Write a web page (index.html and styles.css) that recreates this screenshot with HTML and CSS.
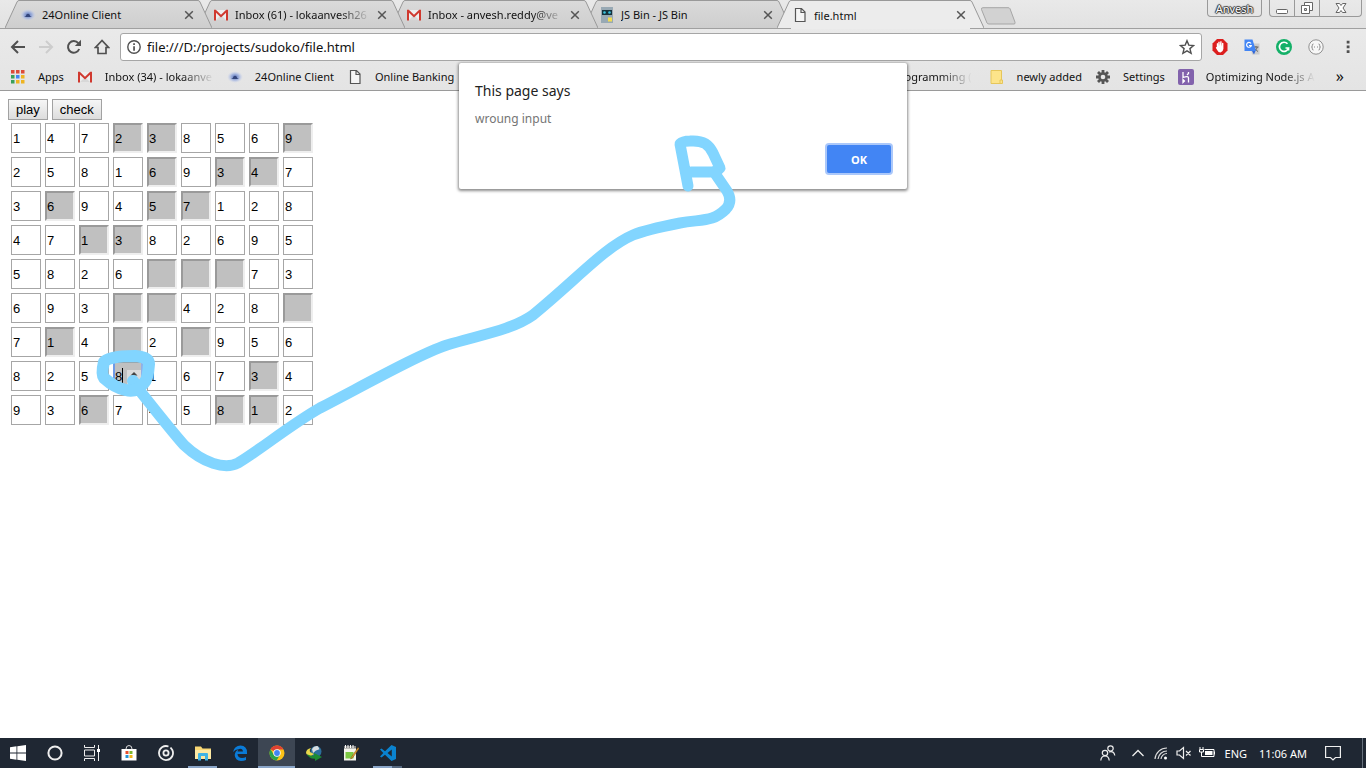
FILE: index.html
```html
<!DOCTYPE html>
<html lang="en">
<head>
<meta charset="utf-8">
<meta name="viewport" content="width=device-width, initial-scale=1">
<title>file.html</title>
<link rel="stylesheet" href="styles.css">
<script src="board.js" defer></script>
</head>
<body>
<svg class="sprites" aria-hidden="true">
  <defs>
    <radialGradient id="haze"><stop offset="0" stop-color="#5470b8"/><stop offset=".5" stop-color="#93a8dc" stop-opacity=".8"/><stop offset="1" stop-color="#c9d3f0" stop-opacity="0"/></radialGradient>
    <linearGradient id="tabfill" x1="0" y1="0" x2="0" y2="1"><stop offset="0" stop-color="#dadada"/><stop offset="1" stop-color="#cecece"/></linearGradient>
  </defs>
  <symbol id="i-24" viewBox="0 0 16 16"><ellipse cx="8" cy="8" rx="8" ry="6" fill="url(#haze)"/><path d="M4 10q2-.5 2.500-2.500 1.500-1.500 3 0Q10 9.500 12 10z" fill="#34467c"/></symbol>
  <symbol id="i-gmail" viewBox="0 0 16 16"><path d="M1 3h14v10H1z" fill="#eeeeee"/><path d="M3 13l5-5 5 5z" fill="#d8d8d8"/><path d="M1 13.500V2.700h1.800L8 7.800l5.200-5.100H15v10.800h-2V5.800L8 10.500 3 5.800v7.700z" fill="#d0392f"/></symbol>
  <symbol id="i-page" viewBox="0 0 16 16"><path d="M3.500 1.500h6l3.500 3.500v9.500H3.500zM9 1.500V5.500h4" fill="#f5f5f5" stroke="#555" stroke-width="1.200"/></symbol>
  <symbol id="i-close" viewBox="0 0 10 10"><path d="M1.200 1.200l7.600 7.600M8.800 1.200l-7.600 7.600" stroke="#555" stroke-width="1.500"/></symbol>
  <symbol id="tab-left" viewBox="0 0 14 28"><path d="M0 28L12 2q.7-1.500 2-1.500V28z" fill="var(--tab)"/><path d="M0 28L12 2q.7-1.500 2-1.500" fill="none" stroke="#999"/></symbol>
  <symbol id="tab-right" viewBox="0 0 14 28"><path d="M14 28L2 2Q1.300.5 0 .5V28z" fill="var(--tab)"/><path d="M14 28L2 2Q1.300.5 0 .5" fill="none" stroke="#999"/></symbol>
</svg>

<header class="chrome">
  <div class="tabstrip">
    <div class="tabs">
      <div class="tab"><svg class="slope"><use href="#tab-left"/></svg><div class="tab-body"><svg class="fav"><use href="#i-24"/></svg><span class="tab-title">24Online Client</span><button class="tab-close" aria-label="Close tab"><svg><use href="#i-close"/></svg></button></div><svg class="slope"><use href="#tab-right"/></svg></div>
      <div class="tab"><svg class="slope"><use href="#tab-left"/></svg><div class="tab-body"><svg class="fav"><use href="#i-gmail"/></svg><span class="tab-title fade">Inbox (61) - lokaanvesh26</span><button class="tab-close" aria-label="Close tab"><svg><use href="#i-close"/></svg></button></div><svg class="slope"><use href="#tab-right"/></svg></div>
      <div class="tab"><svg class="slope"><use href="#tab-left"/></svg><div class="tab-body"><svg class="fav"><use href="#i-gmail"/></svg><span class="tab-title fade">Inbox - anvesh.reddy@ve</span><button class="tab-close" aria-label="Close tab"><svg><use href="#i-close"/></svg></button></div><svg class="slope"><use href="#tab-right"/></svg></div>
      <div class="tab"><svg class="slope"><use href="#tab-left"/></svg><div class="tab-body"><svg class="fav" viewBox="0 0 16 16"><path d="M2 0h12v16H2z" fill="#98a9b4"/><path d="M3 3h10v5H3z" fill="#15323c"/><circle cx="5.500" cy="5.500" r="1.300" fill="#3cc4e0"/><circle cx="10.500" cy="5.500" r="1.300" fill="#3cc4e0"/><path d="M9 10.500h4v4H9z" fill="#f3dc50"/></svg><span class="tab-title">JS Bin - JS Bin</span><button class="tab-close" aria-label="Close tab"><svg><use href="#i-close"/></svg></button></div><svg class="slope"><use href="#tab-right"/></svg></div>
      <div class="tab active"><svg class="slope"><use href="#tab-left"/></svg><div class="tab-body"><svg class="fav"><use href="#i-page"/></svg><span class="tab-title">file.html</span><button class="tab-close" aria-label="Close tab"><svg><use href="#i-close"/></svg></button></div><svg class="slope"><use href="#tab-right"/></svg></div>
    </div>
    <button class="new-tab" aria-label="New tab"><svg viewBox="0 0 36 18"><path d="M3 .7h25q1.500 0 2 1l5 13.500q.5 1.800-1 1.800H9q-1.500 0-2-1L1.500 2.500Q1 .7 3 .7z" fill="#d2d2d2" stroke="#a6a6a6"/></svg></button>
    <div class="win">
      <button class="user">Anvesh</button>
      <div class="win-group">
        <button class="w-min" aria-label="Minimize"><svg viewBox="0 0 14 14"><rect x="1.500" y="8.500" width="11" height="4" rx="1" fill="#fff" stroke="#666"/></svg></button>
        <button class="w-max" aria-label="Restore"><svg viewBox="0 0 14 14"><path d="M4.500 1.500h8v8h-8z" fill="#fff" stroke="#666"/><path d="M1.500 4.500h8v8h-8z" fill="#fff" stroke="#666"/><path d="M4.500 7.500h2v2h-2z" fill="#ddd" stroke="#666"/></svg></button>
        <button class="w-close" aria-label="Close"><svg viewBox="0 0 14 14"><path d="M2 2.500h3.500L7 4.500l1.500-2H12L9 7l3 4.500H8.500L7 9.500l-1.500 2H2L5 7z" fill="#fff" stroke="#666"/></svg></button>
      </div>
    </div>
  </div>

  <div class="toolbar">
    <button class="nav" aria-label="Back"><svg viewBox="0 0 16 16"><path d="M15 8H2M8 2L2 8l6 6" fill="none" stroke="#505050" stroke-width="2"/></svg></button>
    <button class="nav" aria-label="Forward"><svg viewBox="0 0 16 16"><path d="M1 8h13M8 2l6 6-6 6" fill="none" stroke="#cdcdcd" stroke-width="2"/></svg></button>
    <button class="nav" aria-label="Reload"><svg viewBox="0 0 16 16"><path d="M13.200 10A5.800 5.800 0 1 1 12.300 4.200" fill="none" stroke="#505050" stroke-width="2"/><path d="M15 .8v6.200H8.800z" fill="#505050"/></svg></button>
    <button class="nav" aria-label="Home"><svg viewBox="0 0 16 16"><path d="M8 1.500L1.500 8.500H4v6h8v-6h2.500z" fill="none" stroke="#505050" stroke-width="1.700"/></svg></button>
    <div class="omnibox">
      <svg viewBox="0 0 16 16"><circle cx="8" cy="8" r="6.200" fill="none" stroke="#505050" stroke-width="1.400"/><path d="M7.200 4.200h1.700v1.700H7.200zM7.200 7.200h1.700v4.600H7.200z" fill="#505050"/></svg>
      <input type="text" aria-label="Address" value="file:///D:/projects/sudoko/file.html">
      <button class="nav" aria-label="Bookmark this page"><svg viewBox="0 0 16 16"><path d="M8 1.700l1.800 4.400 4.800.4-3.700 3.100 1.200 4.700L8 11.800l-4.100 2.500 1.200-4.700L1.400 6.500l4.800-.4z" fill="none" stroke="#505050" stroke-width="1.400"/></svg></button>
    </div>
    <div class="exts">
      <button class="nav" aria-label="Ad blocker"><svg viewBox="0 0 16 16"><path d="M5 0h6l4.500 4.500v7L11 16H5L.5 11.500v-7z" fill="#dc1f1f"/><path d="M4.800 8V4.500q.6-.9 1.200 0V7.500L6.300 3q.7-.9 1.400 0V7L8.300 2.500q.7-.8 1.300.1V7.500l.5-3.500q.8-.7 1.300.2V10q-.4 3-2.900 3.400-2.200 0-3.200-2.200L3.800 8.700q.3-.9 1-.7z" fill="#fff"/></svg></button>
      <button class="nav" aria-label="Translate"><svg viewBox="0 0 16 16"><path d="M6 4.500h9.500v11H8z" fill="#ccc"/><path d="M9.500 8h5M12 7v1.500M13.500 8q-.8 3-3.500 4M11 9.500q1 2 3 3" stroke="#666" fill="none"/><path d="M.5.500h8l3.500 11.500H.5z" fill="#4285f4"/><path d="M8 12h3.500L10 15.500z" fill="#3367d6"/><path d="M7 4.500A2.400 2.400 0 1 0 7.300 6.500H5" fill="none" stroke="#fff" stroke-width="1.200"/></svg></button>
      <button class="nav" aria-label="Grammar"><svg viewBox="0 0 16 16"><circle cx="8" cy="8" r="8" fill="#14b068"/><path d="M11.500 4.800A4.600 4.600 0 1 0 12.500 9H9.500M12.500 8.500v3" fill="none" stroke="#fff" stroke-width="1.700"/></svg></button>
      <button class="nav" aria-label="JSON viewer"><svg viewBox="0 0 16 16"><circle cx="8" cy="8" r="7.200" fill="#f7f7f7" stroke="#909090"/><path d="M5.500 5q-1.500 0-1.200 1.500Q4.500 8 3.500 8q1 0 .8 1.500Q4 11 5.500 11M10.500 5q1.500 0 1.200 1.500Q11.500 8 12.500 8q-1 0-.8 1.500.3 1.500-1.200 1.500" fill="none" stroke="#888"/><path d="M6 8h1M9 8h1" stroke="#888"/></svg></button>
      <button class="nav" aria-label="Menu"><svg viewBox="0 0 16 16"><path d="M6.700 1.700h2.800v2.800H6.700zM6.700 6.500h2.800v2.800H6.700zM6.700 11.300h2.800v2.800H6.700z" fill="#505050"/></svg></button>
    </div>
  </div>

  <nav class="bookmarks" aria-label="Bookmarks">
    <a href="#"><svg viewBox="0 0 16 16"><path d="M1 1h3.500v3.500H1zM6 1h3.500v3.500H6zM11 1h3.500v3.500H11z" fill="#dd4b39"/><path d="M1 6h3.500v3.500H1zM1 11h3.500v3.500H1z" fill="#3aa05a"/><path d="M6 6h3.500v3.500H6z" fill="#4285f4"/><path d="M11 6h3.500v3.500H11zM6 11h3.500v3.500H6zM11 11h3.500v3.500H11z" fill="#eeb422"/></svg><span>Apps</span></a>
    <a href="#"><svg><use href="#i-gmail"/></svg><span class="clip fade">Inbox (34) - lokaanve</span></a>
    <a href="#"><svg><use href="#i-24"/></svg><span>24Online Client</span></a>
    <a href="#"><svg><use href="#i-page"/></svg><span>Online Banking</span></a>
    <a href="#" class="first-right"><span class="fade">Programming (</span></a>
    <a href="#"><svg viewBox="0 0 16 16"><path d="M2 1.500h10.500v13H2z" fill="#fde48a" stroke="#e6c65a"/><path d="M11 11h2.500v3.500H11z" fill="#fde48a" stroke="#e6c65a"/></svg><span>newly added</span></a>
    <a href="#"><svg viewBox="0 0 16 16"><path d="M8 1v14M1 8h14M3 3l10 10M13 3L3 13" stroke="#555" stroke-width="2.800"/><circle cx="8" cy="8" r="4.800" fill="#555"/><circle cx="8" cy="8" r="2.300" fill="#e8e8e8"/></svg><span>Settings</span></a>
    <a href="#"><svg viewBox="0 0 16 16"><rect width="16" height="16" rx="2" fill="#8262ac"/><path d="M5 3v5.500q5.500-2 5.500.5v4.500M5 10.500v3l1.500-1.500zM10.500 3v1.500L9 6" fill="none" stroke="#fff" stroke-width="1.300"/></svg><span class="clip fade">Optimizing Node.js A</span></a>
    <button class="more" aria-label="More bookmarks">»</button>
  </nav>
</header>

<main class="page">
  <div class="actions"><button>play</button><button>check</button></div>
  <table class="board"><tbody id="board"></tbody></table>
</main>

<footer class="taskbar">
  <div class="apps">
    <button aria-label="Start"><svg viewBox="0 0 16 16"><path d="M0 2.300l6.500-1v6.300H0zM7.300 1.200L16 0v7.600H7.300zM0 8.400h6.500v6.300l-6.500-1zM7.300 8.400H16V16l-8.700-1.200z" fill="#fff"/></svg></button>
    <button aria-label="Search"><svg viewBox="0 0 16 16"><circle cx="8" cy="8" r="6.600" fill="none" stroke="#eee" stroke-width="2"/></svg></button>
    <button aria-label="Task view"><svg viewBox="0 0 16 16"><path d="M.5 0v2.500h10V0M.5 16v-2.500h10V16M.5 5h10v6H.5zM14.500 0v16" fill="none" stroke="#eee"/><path d="M13 4h3v3h-3z" fill="#fff"/></svg></button>
    <button aria-label="Store"><svg viewBox="0 0 16 16"><path d="M.5 4h15v11.500H.5z" fill="#fff"/><path d="M5 4q0-3.500 3-3.500T11 4" fill="none" stroke="#ddd"/><path d="M4.500 6h3v3h-3z" fill="#e8502d"/><path d="M8.500 6h3v3h-3z" fill="#7db72f"/><path d="M4.500 10h3v3h-3z" fill="#2494d6"/><path d="M8.500 10h3v3h-3z" fill="#f0b51c"/></svg></button>
    <button aria-label="Music"><svg viewBox="0 0 16 16"><path d="M10.500 1.500A7 7 0 1 0 14.300 5L12.500 2.500" fill="none" stroke="#eee" stroke-width="1.800"/><circle cx="8" cy="8" r="2.600" fill="none" stroke="#eee" stroke-width="1.800"/></svg></button>
    <button class="open" aria-label="File Explorer"><svg viewBox="0 0 16 16"><path d="M0 1.500h6l1.500 2H16V14H0z" fill="#f8d775"/><path d="M0 5h16v9H0z" fill="#fde9a3"/><path d="M3 15.500V9q0-1 1-1h8q1 0 1 1v6.500h-3V11H6v4.500z" fill="#40b4e5"/></svg></button>
    <button aria-label="Edge"><svg viewBox="0 0 16 16"><path d="M1 7Q2.500.5 8.500.5 15 .8 15 7.500V9H5.500q.3 3.800 4.500 4 2.300 0 4-1v3q-2 1-5 1-6-.4-6.300-6Q3 6 7 4 3 4.300 1 7zM5.600 6.500h5.300Q10.800 3.700 8.300 3.700T5.600 6.500z" fill="#0a7bd8"/></svg></button>
    <button class="open current" aria-label="Chrome"><svg viewBox="0 0 16 16"><circle cx="8" cy="8" r="7.500" fill="#fbc116"/><path d="M8 8L1.500 4.200A7.500 7.500 0 0 1 14.500 4.500H8z" fill="#df4132"/><path d="M8 8l3 2-3.500 5.500A7.500 7.500 0 0 1 1.500 4.200L5 10z" fill="#2ba24c"/><circle cx="8" cy="8" r="3.700" fill="#fff"/><circle cx="8" cy="8" r="2.900" fill="#4285f4"/></svg></button>
    <button aria-label="Download manager"><svg viewBox="0 0 16 16"><circle cx="10" cy="6.500" r="5.500" fill="#2b6f9c"/><path d="M6 4q2-3.500 6-2.800l1.500 3L10 5.500 7 8z" fill="#d8dde0"/><path d="M0 8q0-4 5-5Q3 5 4 7l4 2-3 2Q1 11 0 8z" fill="#e9d84b"/><path d="M1 9q3 2.500 7 1.500V8l8 4-7 4v-2.300Q3 14 1 9z" fill="#1b8c32"/></svg></button>
    <button aria-label="Notepad"><svg viewBox="0 0 16 16"><path d="M1 1h12v14.500H1z" fill="#f5f5ed"/><path d="M1 1h12v2.500H1z" fill="#888"/><path d="M2.500 0v3M5 0v3M7.500 0v3M10 0v3" stroke="#fff"/><path d="M2.500 7h8v6.500h-8z" fill="#7cc943"/><path d="M15 2.500L8.500 12 7.500 14l2-1L16 3.500z" fill="#e9a32b" stroke="#775018" stroke-width=".5"/></svg></button>
    <button class="open multi" aria-label="Code editor"><svg viewBox="0 0 16 16"><path d="M11.500 0L16 2v12l-4.500 2L5 9.700l-3.500 2.800L0 11.500 3.300 8 0 4.500l1.500-1L5 6.300zM11.800 4.500L7.500 8l4.300 3.500z" fill="#0a83d0"/></svg></button>
  </div>
  <div class="tray">
    <button aria-label="People"><svg viewBox="0 0 16 16"><circle cx="10.500" cy="3.500" r="2.700" fill="none" stroke="#eee" stroke-width="1.200"/><path d="M9 7q5-1.500 5.800 3.500" fill="none" stroke="#eee" stroke-width="1.200"/><circle cx="5" cy="8" r="2.700" fill="none" stroke="#eee" stroke-width="1.200"/><path d="M.8 15.500Q1.200 11 5 11t4.200 4.500" fill="none" stroke="#eee" stroke-width="1.200"/></svg></button>
    <button aria-label="Hidden icons"><svg viewBox="0 0 16 16"><path d="M2.500 11L8 5.500l5.500 5.500" fill="none" stroke="#eee" stroke-width="1.300"/></svg></button>
    <button aria-label="Network"><svg viewBox="0 0 16 16"><path d="M2 14A12 12 0 0 1 14 3M5 14a9 9 0 0 1 9-8M8 14a6 6 0 0 1 6-5.500" fill="none" stroke="#ddd" stroke-width="1.200"/><circle cx="12.500" cy="13" r="1.500" fill="#fff"/></svg></button>
    <button aria-label="Volume"><svg viewBox="0 0 16 16"><path d="M1 6h2.500L7.500 2.500v11L3.500 10H1zM10 6l4.500 4.500M14.500 6L10 10.500" fill="none" stroke="#eee" stroke-width="1.200"/></svg></button>
    <button aria-label="Battery"><svg viewBox="0 0 16 16"><path d="M5.500 4.500h9.500v7H4.500" fill="none" stroke="#fff"/><path d="M6 6h7.500v4H6zM15 6.500h1v3h-1z" fill="#fff"/><path d="M1 2v2M4 2v2M.5 4.500h4V7h-4zM2.500 7v4.500H6" fill="none" stroke="#fff"/></svg></button>
    <span class="lang">ENG</span>
    <time class="clock">11:06 AM</time>
    <button aria-label="Notifications"><svg viewBox="0 0 16 16"><path d="M.6 1.500h14.800v11H10.500L8 15l-2.500-2.500H.6z" fill="none" stroke="#eee" stroke-width="1.200"/></svg></button>
    <span class="peek"></span>
  </div>
</footer>

<div class="dialog" role="alertdialog" aria-labelledby="dlg-title" aria-describedby="dlg-text">
  <h1 id="dlg-title">This page says</h1>
  <p id="dlg-text">wroung input</p>
  <div class="dialog-actions"><button>OK</button></div>
</div>

<svg class="ink" width="760" height="480" viewBox="0 0 760 480" aria-hidden="true">
  <g fill="none" stroke="#82d5ff" stroke-width="11" stroke-linecap="round" stroke-linejoin="round">
    <path d="M688 186L680 144Q683 141 690 141C704 140 709 145 713 153L720 168Q717 172 710 172H691"/>
    <path d="M714 172L727 191Q733 201 726 209C713 222 703 219 680 223C660 227 645 230 633 235C605 247 577 279 533 315C512 330 480 335 447 345C420 354 370 382 320 408C290 425 260 450 238 463C225 470 203 463 184 445Q174 434 136 386"/>
    <path d="M133 381L139 390" stroke-width="12"/>
    <path d="M104 362Q108 356 135 356Q149 357 149 364Q148 379 144 383Q136 393 126 390Q115 388 104 378Q101 374 104 362z" stroke-width="12"/>
  </g>
</svg>
</body>
</html>
```

FILE: styles.css
```css
* { box-sizing: border-box; }

body {
  margin: 0;
  min-height: 100vh;
  display: flex;
  flex-direction: column;
  position: relative;
  background: #fff;
  font-family: "Noto Sans", "Open Sans", sans-serif;
  font-size: 11px;
  color: #111;
}

button {
  font: inherit;
  color: inherit;
  border: 0;
  padding: 0;
  background: none;
}

svg { display: block; flex: none; }

.sprites { position: absolute; width: 0; height: 0; }

.fade {
  -webkit-mask-image: linear-gradient(to left, transparent, #000 32px);
  mask-image: linear-gradient(to left, transparent, #000 32px);
}

/* Tab strip */
.chrome { background: linear-gradient(#ececec, #e4e4e4); border-bottom: 1px solid #9a9a9a; }

.tabstrip {
  display: flex;
  height: 29px;
  padding-left: 5px;
  background: linear-gradient(#e9e9e9, #e2e2e2);
  border-bottom: 1px solid #a0a0a0;
}

.tabs { display: flex; flex: 0 1 979px; height: 28px; min-width: 0; }

.tab {
  --tab: url(#tabfill);
  display: flex;
  flex: 0 1 207px;
  min-width: 0;
  margin-right: -14px;
  position: relative;
}

.tab:nth-child(1) { z-index: 4; }
.tab:nth-child(2) { z-index: 3; }
.tab:nth-child(3) { z-index: 2; }
.tab:nth-child(4) { z-index: 1; }
.tab.active { --tab: #ececec; z-index: 5; height: 29px; margin-right: 0; }

.slope { width: 14px; height: 28px; }

.tab-body {
  flex: 1;
  min-width: 0;
  display: flex;
  align-items: center;
  padding: 0 4px 0 1px;
  border-top: 1px solid #999;
  background: linear-gradient(#dadada, #cecece);
}

.active .tab-body { background: #ececec; }

.fav { width: 16px; height: 16px; }

.tab-title { flex: 1; min-width: 0; margin: 0 6px; overflow: hidden; white-space: nowrap; }

.tab-close { width: 10px; height: 10px; }
.tab-close svg { width: 10px; height: 10px; }

.new-tab { margin: 7px 0 0 -4px; height: 18px; }
.new-tab svg { width: 36px; height: 18px; }

.win { display: flex; gap: 7px; margin-left: auto; padding-right: 4px; height: 17px; }

.user, .win-group {
  border: 1px solid #999;
  border-top: 0;
  border-radius: 0 0 4px 4px;
}

.user {
  width: 55px;
  color: #fff;
  text-shadow: 0 0 1px #333, 1px 0 1px #333, -1px 0 1px #333, 0 1px 1px #333, 0 -1px 1px #333;
}

.win-group { display: flex; }
.win-group button { display: grid; place-items: center; width: 25px; border-right: 1px solid #999; }
.win-group .w-close { width: 41px; border-right: 0; }
.win-group svg { width: 14px; height: 14px; }

/* Toolbar */
.toolbar { display: flex; align-items: center; gap: 12px; height: 34px; padding: 2px 10px 0; }

.nav, .nav svg { width: 16px; height: 16px; }

.omnibox {
  flex: 1;
  display: flex;
  align-items: center;
  gap: 5px;
  height: 28px;
  margin: 0 -2px;
  padding: 0 6px 0 5px;
  border: 1px solid #a6a6a6;
  border-radius: 3px;
  background: #fff;
}

.omnibox > svg { width: 16px; height: 16px; }

.omnibox input {
  flex: 1;
  min-width: 0;
  border: 0;
  padding: 0;
  outline: 0;
  background: none;
  font: 13px "Noto Sans", "Open Sans", sans-serif;
  color: #111;
}

.exts { display: flex; gap: 16px; }

/* Bookmarks bar */
.bookmarks { display: flex; align-items: center; gap: 13px; height: 27px; padding: 0 22px 0 10px; }

.bookmarks a {
  display: flex;
  align-items: center;
  gap: 12px;
  color: inherit;
  text-decoration: none;
  white-space: nowrap;
}

.bookmarks svg { width: 16px; height: 16px; }
.bookmarks .clip { width: 109px; }
.bookmarks .first-right { margin-left: auto; margin-right: 4px; }
.more { font-size: 16px; line-height: 20px; margin-left: 8px; padding-bottom: 2px; }

/* Page */
.page { flex: 1; padding: 8px; font-family: "Liberation Sans", Arial, sans-serif; font-size: 13px; }

.actions { display: flex; gap: 4px; }

.actions button {
  height: 21px;
  padding: 0 7px;
  border: 1px solid #a2a2a2;
  background: linear-gradient(#f6f6f6, #dddddd);
  color: #000;
}

.board { border-spacing: 2px; }
.board td { padding: 1px; position: relative; }

.board input {
  display: block;
  width: 30px;
  height: 30px;
  padding: 0 1px;
  border: 1px solid #a6a6a6;
  border-radius: 0;
  background: #fff;
  font: 13px "Liberation Sans", Arial, sans-serif;
  color: #000;
  outline: 0;
}

.board .blank {
  padding: 0;
  border: 2px solid;
  border-color: #9a9a9a #eeeeee #eeeeee #9a9a9a;
  background: #c0c0c0;
}

.board .focused { border-color: #9a9a9a #8fb0e8 #8fb0e8 #6f9ae8; }

.caret { position: absolute; left: 10px; top: 8px; width: 1px; height: 16px; background: #000; }

.spinner {
  position: absolute;
  right: 3px;
  top: 10px;
  width: 14px;
  height: 15px;
  background: #dcdcdc;
}

/* Taskbar */
.taskbar {
  display: flex;
  justify-content: space-between;
  height: 30px;
  background: #1f2733;
  color: #fff;
}

.apps { display: flex; }
.apps button { width: 37px; display: grid; place-items: center; position: relative; }
.apps button:first-child { width: 36px; }
.apps svg { width: 16px; height: 16px; }
.apps .current { background: #3d4653; }

.apps .open::after {
  content: "";
  position: absolute;
  left: 4px;
  right: 4px;
  bottom: 0;
  height: 2px;
  background: #8aa5c8;
}

.apps .current::after { left: 0; right: 0; }
.apps .multi::after { background: linear-gradient(to right, #8aa5c8 19px, #56687f 19px); }

.tray { display: flex; align-items: center; gap: 7px; }
.tray button, .tray svg { width: 16px; height: 16px; }
.tray button:first-child { margin-right: 7px; }
.lang { margin-left: 3px; }
.clock { margin: 0 11px 0 5px; }
.peek { width: 1px; height: 30px; margin: 0 3px 0 14px; background: #66707c; }

/* Dialog */
.dialog {
  position: absolute;
  z-index: 10;
  top: 63px;
  left: 50%;
  width: 448px;
  transform: translateX(-50%);
  padding: 16px;
  border-radius: 2px;
  background: #fff;
  box-shadow: 0 1px 3px 1px rgba(0, 0, 0, .45);
}

.dialog h1 { margin: 0; font-size: 14px; line-height: 24px; font-weight: 400; color: #222; }
.dialog p { margin: 6px 0 0; font-size: 12px; line-height: 20px; color: #757575; }
.dialog-actions { display: flex; justify-content: flex-end; margin-top: 16px; }

.dialog-actions button {
  width: 64px;
  height: 28px;
  border-radius: 2px;
  background: #4285f4;
  box-shadow: 0 0 0 2px #abc8fa;
  color: #fff;
  font-size: 11px;
  font-weight: 700;
}

.ink { position: absolute; z-index: 20; left: 0; top: 0; pointer-events: none; }
```

FILE: board.js
```js
// A "*" marks a cell the player fills in; "_" is an empty one.
const rows = [
  "1 4 7 2* 3* 8 5 6 9*",
  "2 5 8 1 6* 9 3* 4* 7",
  "3 6* 9 4 5* 7* 1 2 8",
  "4 7 1* 3* 8 2 6 9 5",
  "5 8 2 6 _* _* _* 7 3",
  "6 9 3 _* _* 4 2 8 _*",
  "7 1* 4 _* 2 _* 9 5 6",
  "8 2 5 8*! 1 6 7 3* 4",
  "9 3 6* 7 4 5 8* 1* 2"
];

const board = document.getElementById("board");

rows.forEach((line, r) => {
  const tr = board.insertRow();
  line.split(" ").forEach((cell, c) => {
    const td = tr.insertCell();
    const input = document.createElement("input");
    input.type = "text";
    input.inputMode = "numeric";
    input.setAttribute("aria-label", `Row ${r + 1}, column ${c + 1}`);
    input.setAttribute("value", cell[0] === "_" ? "" : cell[0]);
    if (cell.includes("*")) input.classList.add("blank");
    td.append(input);
    if (cell.includes("!")) {
      input.classList.add("focused");
      td.insertAdjacentHTML("beforeend",
        '<span class="caret"></span><svg class="spinner" viewBox="0 0 14 15"><path d="M3.500 5.500L7 2l3.500 3.500z" fill="#444"/></svg>');
    }
  });
});
```
